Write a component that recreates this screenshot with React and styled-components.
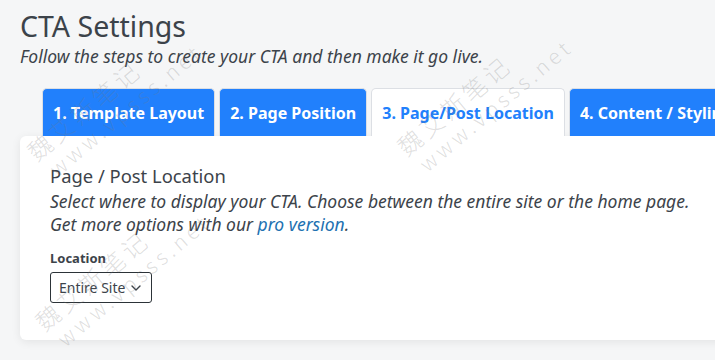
import React from 'react';
import styled, { createGlobalStyle } from 'styled-components';

const COLORS = {
  page: '#f5f6f7',
  text: '#3c434a',
  blue: '#2180fc',
  tabBorder: '#dcdfe4',
  link: '#2271b1',
};

const GlobalStyle = createGlobalStyle`
  html, body {
    margin: 0;
    padding: 0;
    background: ${COLORS.page};
    font-family: "Noto Sans", "Open Sans", sans-serif;
    color: ${COLORS.text};
  }
`;

const TABS = [
  { id: 1, label: '1. Template Layout' },
  { id: 2, label: '2. Page Position' },
  { id: 3, label: '3. Page/Post Location' },
  { id: 4, label: '4. Content / Styling' },
];

const Page = styled.div`
  position: relative;
  width: 715px;
  height: 360px;
  overflow: hidden;
  padding: 8px 0 0 20px;
  box-sizing: border-box;
`;

const Title = styled.h1`
  margin: 0;
  font-size: 28.5px;
  font-weight: 400;
  line-height: 36px;
  color: ${COLORS.text};
`;

const Lead = styled.p`
  margin: 0;
  font-size: 17.5px;
  font-style: italic;
  line-height: 24px;
`;

const TabBar = styled.div`
  display: flex;
  gap: 4px;
  margin: 20px 0 0 22px;
  white-space: nowrap;
`;

const Tab = styled.div`
  flex: none;
  height: 48px;
  padding: 0 10px;
  display: flex;
  align-items: center;
  box-sizing: border-box;
  border: 1px solid ${COLORS.tabBorder};
  border-bottom: none;
  border-radius: 5px 5px 0 0;
  font-size: 16px;
  font-weight: 700;
  background: ${(p) => (p.$active ? '#fff' : COLORS.blue)};
  color: ${(p) => (p.$active ? COLORS.blue : '#fff')};
`;

const Card = styled.section`
  width: 720px;
  height: 204px;
  box-sizing: border-box;
  padding: 27px 30px;
  background: #fff;
  border-radius: 6px 0 0 6px;
  box-shadow: 0 2px 10px rgba(0, 0, 0, 0.08);
`;

const Heading = styled.h2`
  margin: 0;
  font-size: 18.4px;
  font-weight: 400;
  line-height: 26px;
`;

const Help = styled.p`
  margin: 1px 0 0;
  font-size: 17.5px;
  font-style: italic;
  line-height: 23px;

  a {
    color: ${COLORS.link};
    text-decoration: none;
  }
`;

const Label = styled.label`
  display: block;
  margin-top: 14px;
  font-size: 13px;
  font-weight: 700;
  line-height: 16px;
`;

const Select = styled.div`
  margin-top: 6px;
  width: 102px;
  height: 31px;
  box-sizing: border-box;
  display: flex;
  align-items: center;
  gap: 5px;
  padding: 0 8px;
  border: 1px solid #2c3338;
  border-radius: 3px;
  font-size: 14px;
  white-space: nowrap;
`;

const Watermark = styled.div`
  position: absolute;
  left: ${(p) => p.$x}px;
  top: ${(p) => p.$y}px;
  transform: rotate(-40deg);
  transform-origin: left top;
  pointer-events: none;
  color: rgba(120, 120, 120, 0.24);
  font-family: "Noto Sans CJK SC", "DejaVu Sans", sans-serif;
  font-weight: 300;
  line-height: 26px;
  white-space: nowrap;

  span {
    display: block;
    font-size: 24px;
    letter-spacing: 4px;
  }
  span + span {
    font-size: 21px;
    margin-left: 6px;
    letter-spacing: 4px;
  }
`;

const Chevron = () => (
  <svg width="12" height="12" viewBox="0 0 12 12" fill="none">
    <path d="M2 4l4 4 4-4" stroke="#3c434a" strokeWidth="1.4" strokeLinecap="round" strokeLinejoin="round" />
  </svg>
);

const MARKS = [
  { x: 22, y: 145 },
  { x: 392, y: 140 },
  { x: 30, y: 315 },
];

export default function App() {
  return (
    <Page>
      <GlobalStyle />
      <Title>CTA Settings</Title>
      <Lead>Follow the steps to create your CTA and then make it go live.</Lead>
      <TabBar>
        {TABS.map((t) => (
          <Tab key={t.id} $active={t.id === 3}>
            {t.label}
          </Tab>
        ))}
      </TabBar>
      <Card>
        <Heading>Page / Post Location</Heading>
        <Help>
          Select where to display your CTA. Choose between the entire site or the home page.
          <br />
          Get more options with our <a href="#pro">pro version</a>.
        </Help>
        <Label>Location</Label>
        <Select>
          Entire Site <Chevron />
        </Select>
      </Card>
      {MARKS.map((m, i) => (
        <Watermark key={i} $x={m.x} $y={m.y}>
          <span>魏艾斯笔记</span>
          <span>www.vpsss.net</span>
        </Watermark>
      ))}
    </Page>
  );
}
